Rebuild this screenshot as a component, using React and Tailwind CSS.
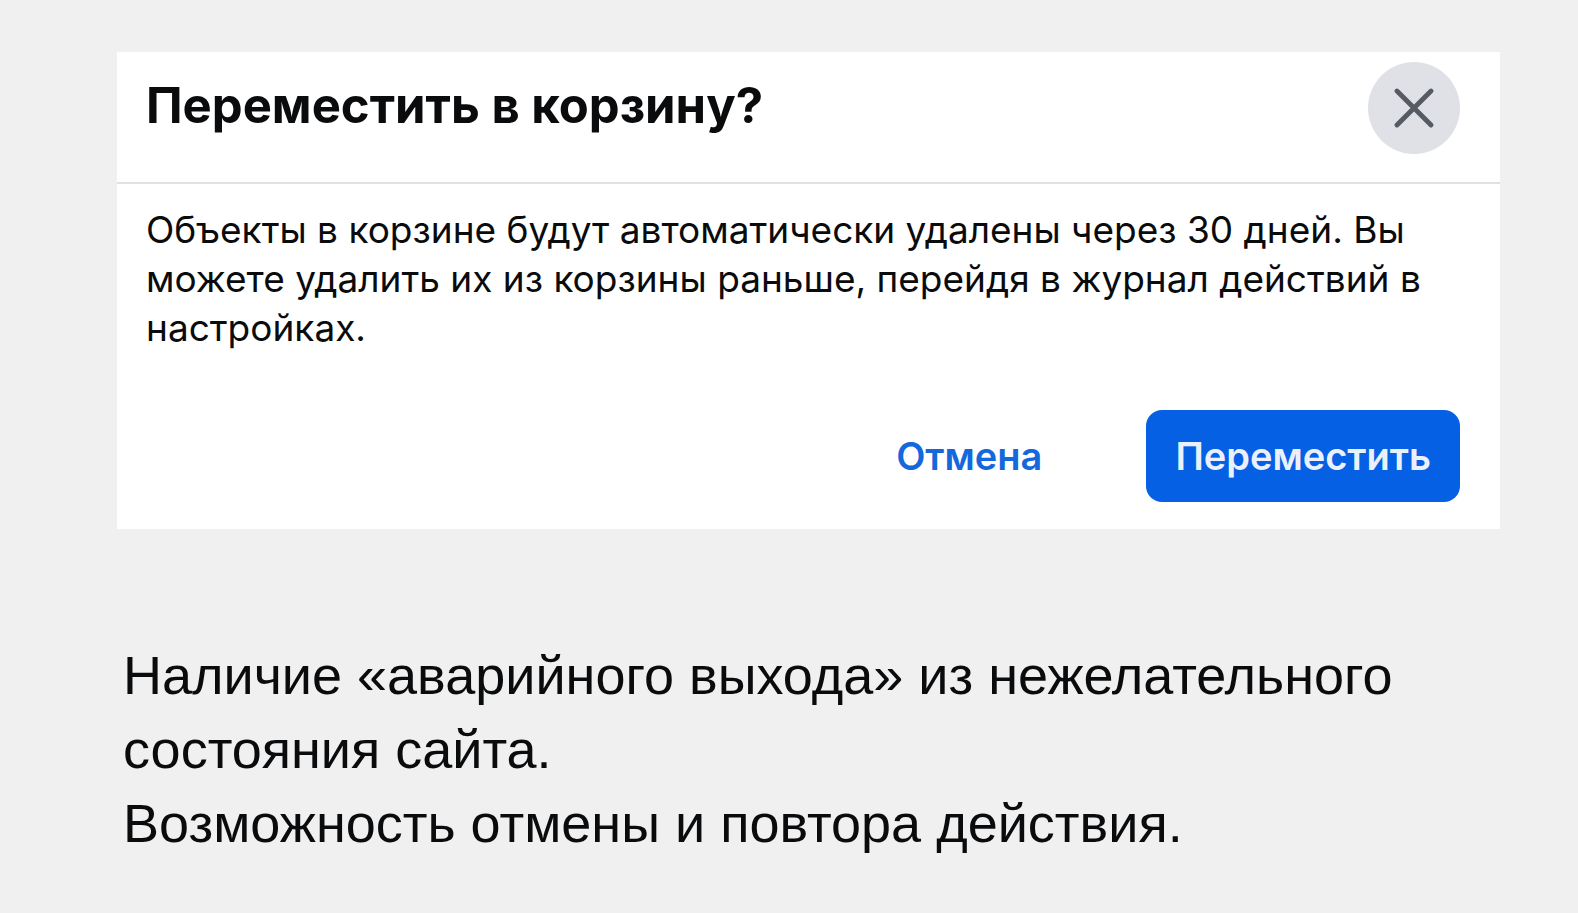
export default function App() {
  return (
    <main className="min-h-screen bg-[#f0f0f0] pt-[52px] pr-[78px] pl-[117px] font-['Inter',sans-serif] text-[#0a0b0d]">
      <section role="dialog" aria-labelledby="title" className="bg-white">
        <header className="flex items-start justify-between border-b-2 border-[#e0e1e3] pt-[10px] pr-10 pb-7 pl-[29px]">
          <h1 id="title" className="pt-5 text-[49px] leading-[48px] font-bold">Переместить в корзину?</h1>
          <button type="button" aria-label="Закрыть" className="flex size-[92px] shrink-0 items-center justify-center rounded-full bg-[#dfe1e6] text-[#565a62]">
            <svg viewBox="0 0 40 40" className="size-10" fill="none" stroke="currentColor" strokeWidth="4.8" strokeLinecap="round">
              <path d="M3 3 37 37M37 3 3 37" />
            </svg>
          </button>
        </header>
        <p className="pt-[21px] pr-[60px] pl-[29px] text-[37px] leading-[49px]">
          Объекты в корзине будут автоматически удалены через 30 дней. Вы можете удалить их из корзины раньше, перейдя в журнал действий в настройках.
        </p>
        <footer className="flex items-center justify-end gap-[74px] pt-[58px] pr-10 pb-[27px] text-[38px] font-semibold">
          <button type="button" className="h-[92px] px-[30px] text-[#1468dc]">Отмена</button>
          <button type="button" className="h-[92px] rounded-2xl bg-[#0560e3] px-[29px] text-[#eaf1fc]">Переместить</button>
        </footer>
      </section>
      <section className="pt-[109px] pl-[6px] font-['Liberation_Sans',sans-serif] text-[54px] leading-[74px]">
        <p>Наличие «аварийного выхода» из нежелательного состояния сайта.</p>
        <p>Возможность отмены и повтора действия.</p>
      </section>
    </main>
  );
}
